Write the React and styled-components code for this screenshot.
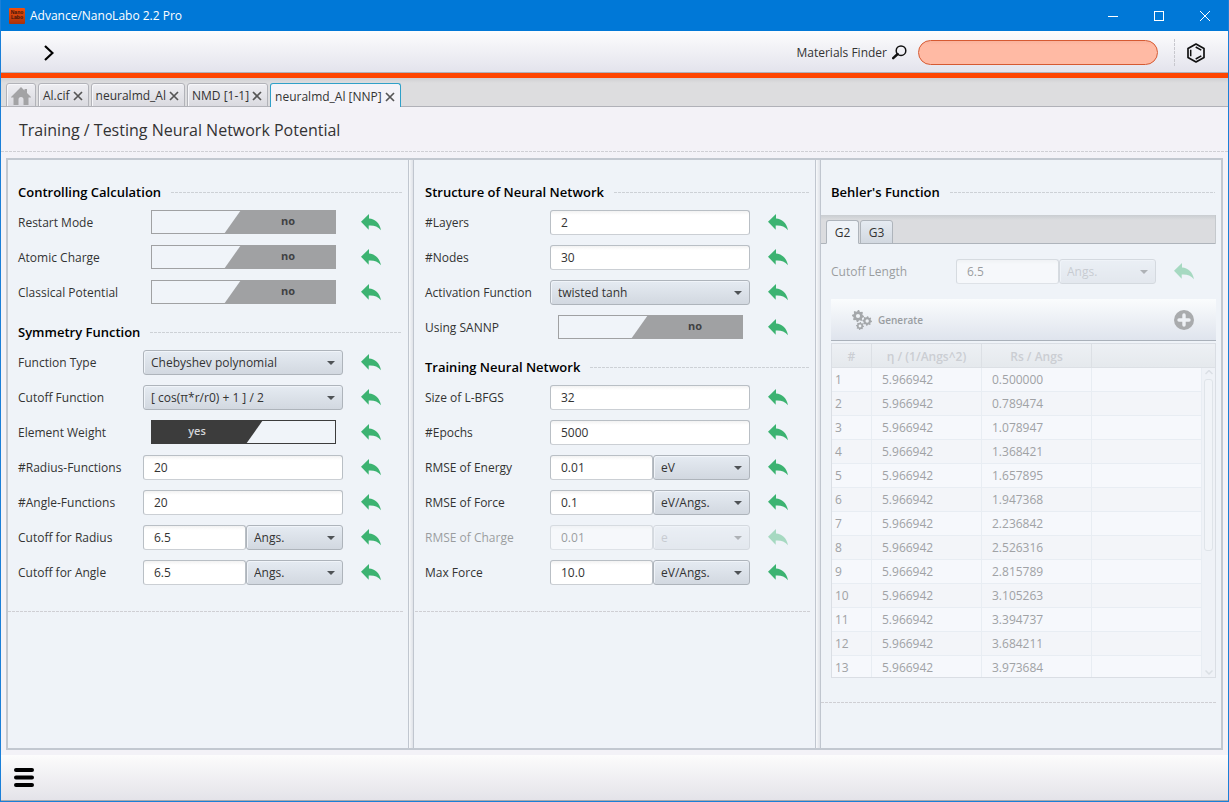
import React from "react";
import styled, { createGlobalStyle, css } from "styled-components";

const GlobalStyle = createGlobalStyle`
  *, *::before, *::after { box-sizing: border-box; }
  html, body { margin: 0; padding: 0; }
  body, button, input, select, table {
    font-family: "Open Sans", "Noto Sans", sans-serif;
    font-size: 12px;
    line-height: 16px;
    color: #333333;
  }
  button { padding: 0; border: 0; background: none; cursor: pointer; }
`;

const dashed = (color) => css`
  background: repeating-linear-gradient(to right, ${color} 0 3px, transparent 3px 4px);
`;

/* ---------- window frame ---------- */

const Window = styled.div`
  display: flex;
  flex-direction: column;
  min-height: 100vh;
  border: 1px solid #1a7fd8;
  border-top: 0;
  background: #f3f2f7;
`;

const TitleBar = styled.header`
  display: flex;
  align-items: center;
  height: 31px;
  padding-left: 8px;
  background: #0078d7;
  color: #ffffff;
`;

const AppIcon = styled.svg`
  width: 16px;
  height: 16px;
  margin-right: 5px;
`;

const AppTitle = styled.h1`
  margin: 0;
  flex: 1;
  font-size: 12px;
  font-weight: 400;
`;

const WindowButton = styled.button`
  display: flex;
  align-items: center;
  justify-content: center;
  width: 46px;
  height: 31px;
  color: #ffffff;
`;

/* ---------- top toolbar ---------- */

const TopBar = styled.div`
  display: flex;
  align-items: center;
  height: 47px;
  padding: 1px 22px 0 38px;
  border-bottom: 5px solid #ff4500;
  background: linear-gradient(#fcfcfd, #e3e3ec);
  box-shadow: inset 0 -1px 0 #b0b1b8;
`;

const IconButton = styled.button`
  display: flex;
  align-items: center;
  justify-content: center;
  width: 20px;
  height: 24px;
  color: #000000;
`;

const FinderLabel = styled.label`
  display: flex;
  align-items: center;
  gap: 5px;
  margin-left: auto;
  margin-right: 11px;
`;

const SearchBox = styled.input`
  width: 240px;
  height: 25px;
  padding: 0 14px;
  border: 1px solid #d65a32;
  border-radius: 13px;
  background: linear-gradient(#f9b39d, #ffbaa4 4px);
  outline: none;
`;

const ToolbarRule = styled.div`
  width: 1px;
  height: 27px;
  margin: 0 11px 0 16px;
  background: repeating-linear-gradient(#c8c8ce 0 3px, transparent 3px 4px);
`;

/* ---------- document tabs ---------- */

const DocTabs = styled.nav`
  display: flex;
  align-items: flex-end;
  gap: 2px;
  height: 29px;
  padding-left: 5px;
  background: linear-gradient(#cfcfd2, #dddddf 5px);
  box-shadow: inset 0 -1px 0 #b0b1b8;
`;

const DocTab = styled.div`
  display: flex;
  align-items: center;
  gap: 3px;
  height: 24px;
  padding: 2px 5px 0 4px;
  border: 1px solid #b2b3b9;
  border-radius: 3px 3px 0 0;
  background: linear-gradient(#eeeef2, #dadae0);
  box-shadow: inset 1px 1px 0 #f7f7fa;
  ${(p) => p.$home && css`
    width: 30px;
    padding: 2px 0 0;
    justify-content: center;
  `}
  ${(p) => p.$active && css`
    border-color: #2fa0c8;
    border-bottom: 0;
    background: #f4f3f8;
    box-shadow: none;
  `}
`;

const TabName = styled.button`
  font-size: 12px;
  white-space: nowrap;
`;

const TabClose = styled.button`
  display: flex;
  color: #555555;
`;

const PageTitle = styled.h2`
  margin: 0;
  padding: 13px 18px 11px;
  font-size: 16px;
  font-weight: 500;
  line-height: 20px;
  color: #333333;
`;

const Rule = styled.div`
  height: 1px;
  ${dashed("#cfcfd4")}
`;

/* ---------- panels ---------- */

const Panels = styled.main`
  display: grid;
  grid-template-columns: minmax(0, 1fr) 7px minmax(0, 1fr) 6px minmax(0, 1fr);
  flex: 1;
  margin: 6px 5px 5px;
  border: 2px solid #c2c8d0;
  background: #eff3f8;
`;

const Divider = styled.div`
  width: 6px;
  border: solid #c0c6cf;
  border-width: 0 1px;
  background: linear-gradient(to right, #f7f9fb, #dfe2e8);
`;

const Column = styled.section`
  padding: 22px 5px 0 0;
`;

const Heading = styled.h3`
  display: flex;
  align-items: center;
  gap: 10px;
  height: 20px;
  margin: 0 1px 8px 10px;
  font-size: 13px;
  font-weight: 600;
  line-height: 20px;
  color: #000000;
  white-space: nowrap;
  &::after {
    content: "";
    flex: 1;
    height: 1px;
    ${dashed("#cdd1d6")}
  }
`;

const Fields = styled.div`
  display: grid;
  gap: 10px;
  padding-left: 10px;
  & + ${Heading} { margin-top: 17px; }
`;

const EndRule = styled(Rule)`
  margin-top: 26px;
`;

const FieldRow = styled.div`
  display: grid;
  grid-template-columns: 125px 200px 20px;
  align-items: center;
  height: 25px;
  & > :last-child { margin-left: 18px; }
`;

const FieldLabel = styled.label`
  white-space: nowrap;
  opacity: ${(p) => (p.$off ? 0.45 : 1)};
`;

const Control = styled.div`
  display: flex;
  height: 25px;
`;

const TextBox = styled.input`
  flex: 1;
  min-width: 0;
  height: 25px;
  padding: 0 10px;
  border: 1px solid #b9bfc5;
  border-bottom-color: #cbcfd4;
  border-radius: 3px;
  background: linear-gradient(#f2f2f2, #ffffff 4px);
  outline: none;
  &:disabled {
    opacity: 0.45;
  }
`;

const SelectBox = styled.div`
  position: relative;
  width: ${(p) => (p.$unit ? "97px" : "100%")};
  opacity: ${(p) => (p.$off ? 0.4 : 1)};
  &::after {
    content: "";
    position: absolute;
    top: 11px;
    right: 8px;
    border: 4px solid transparent;
    border-top-color: #4f5356;
    border-bottom: 0;
    pointer-events: none;
  }
`;

const Select = styled.select`
  appearance: none;
  width: 100%;
  height: 25px;
  padding: 0 20px 0 7px;
  border: 1px solid #aeb4bb;
  border-radius: 3px;
  background: linear-gradient(#e5ebf2, #d2d8e0);
  box-shadow: inset 1px 1px 0 #f0f4f9;
  outline: none;
  &:disabled { color: #8d9298; opacity: 1; }
`;

const Toggle = styled.span`
  position: relative;
  display: block;
  flex: 1;
  height: 24px;
  margin: 0 7px 0 8px;
  border: 1px solid ${(p) => (p.$on ? "#3c3c3c" : "#a0a1a3")};
  background: #f0f4f9;
`;

const ToggleFill = styled.span`
  position: absolute;
  top: -1px;
  bottom: -1px;
  display: flex;
  align-items: center;
  justify-content: center;
  padding-bottom: 2px;
  font-size: 11px;
  font-weight: 700;
  pointer-events: none;
  ${(p) => p.$on ? css`
    left: -1px;
    width: 112px;
    padding-right: 20px;
    background: #3c3c3c;
    color: #d5d6d8;
    font-weight: 600;
    clip-path: polygon(0 0, 100% 0, 95px 100%, 0 100%);
  ` : css`
    right: -1px;
    width: 112px;
    padding-left: 16px;
    background: #a0a1a3;
    color: #404143;
    clip-path: polygon(17px 0, 100% 0, 100% 100%, 0 100%);
  `}
`;

const ToggleInput = styled.input`
  appearance: none;
  position: absolute;
  inset: 0;
  margin: 0;
  cursor: pointer;
`;

const UndoButton = styled.button`
  display: flex;
  align-items: center;
  width: 20px;
  height: 25px;
  color: #3cb371;
  opacity: ${(p) => (p.disabled ? 0.4 : 1)};
`;

/* ---------- Behler's function ---------- */

const SubTabs = styled.div`
  display: flex;
  align-items: flex-end;
  gap: 1px;
  height: 29px;
  margin: 13px 0 15px;
  padding-left: 5px;
  border-right: 1px solid #c5c9cd;
  background: linear-gradient(#c9cdd1, #dbdcdf 5px);
  box-shadow: inset 0 -1px 0 #aeb4bb;
`;

const SubTab = styled.button`
  width: 33px;
  height: 24px;
  padding-top: 1px;
  border: 1px solid #aeb4bb;
  border-radius: 3px 3px 0 0;
  background: linear-gradient(#e5ebf2, #d2d8e0);
  ${(p) => p.$active && css`
    border-bottom-color: transparent;
    background: #eff3f8;
    background-clip: border-box;
  `}
`;

const GridBar = styled.div`
  display: flex;
  align-items: center;
  justify-content: space-between;
  height: 42px;
  margin: 15px 0 2px 10px;
  padding: 0 22px 0 21px;
  border-bottom: 1px solid #aab1ba;
  background: linear-gradient(#fafcfd, #dfe4ed);
`;

const GenerateButton = styled.button`
  display: flex;
  align-items: center;
  gap: 6px;
  font-size: 10px;
  font-weight: 600;
  color: #999da1;
`;

const AddButton = styled.button`
  display: flex;
`;

const TableFrame = styled.div`
  display: grid;
  grid-template-columns: minmax(0, 1fr) 13px;
  grid-template-rows: 24px 309px;
  height: 335px;
  margin: 0 0 24px 10px;
  overflow: hidden;
  border: 1px solid #dadee4;
  background: #f6f8fc;
`;

const Table = styled.table`
  grid-row: 1 / 3;
  width: 100%;
  border-collapse: separate;
  border-spacing: 0;
  table-layout: fixed;
  color: #a0a2a5;
  col:nth-child(1) { width: 40px; }
  col:nth-child(2), col:nth-child(3) { width: 110px; }
  th {
    height: 24px;
    padding: 2px 0 0;
    border: solid #dce0e5;
    border-width: 0 1px 1px 0;
    background: linear-gradient(#edf0f4, #e5e9ed);
    color: #cbced3;
    font-weight: 600;
  }
  th:last-child { border-right: 0; }
  td {
    height: 24px;
    padding: 0 0 0 10px;
    border: solid #e8edf3;
    border-width: 0 1px 1px 0;
  }
  td:first-child { padding-left: 3px; }
  tr:nth-child(even) td { background: #f3f5f9; }
`;

const HeaderCorner = styled.div`
  border-bottom: 1px solid #dce0e5;
  background: linear-gradient(#edf0f4, #e5e9ed);
`;

const ScrollTrack = styled.div`
  display: flex;
  flex-direction: column;
  align-items: center;
  gap: 4px;
  padding: 2px 0 2px;
  background: #eff2f7;
`;

const ScrollThumb = styled.div`
  width: 9px;
  height: 172px;
  border: 1px solid #dfe4e9;
  border-radius: 3px;
  background: #f1f4f8;
  margin-bottom: auto;
`;

/* ---------- footer ---------- */

const Footer = styled.footer`
  display: flex;
  align-items: center;
  height: 46px;
  padding: 0 13px;
  border-bottom: 1px solid #a8a9ae;
  background: linear-gradient(#fcfcfc, #e4e3e9);
`;

/* ---------- drawings ---------- */

const UndoIcon = () => (
  <svg width="20" height="17" viewBox="0 0 20 17" aria-hidden="true">
    <path d="M0 7.700 8 0V4.600C14 5 18.500 9 20 16.200C16.500 12.300 13 11.300 7.700 11.600V15.800Z" fill="currentColor" />
  </svg>
);

const CrossIcon = () => (
  <svg width="10" height="10" viewBox="0 0 10 10" aria-hidden="true">
    <path d="M1 1 9 9M9 1 1 9" stroke="currentColor" strokeWidth="1.700" fill="none" />
  </svg>
);

const HomeIcon = () => (
  <svg width="20" height="18" viewBox="0 0 20 18" aria-hidden="true">
    <path d="M10 0 13.500 3.500V2H16V6L20 10V10.500H17.500V18H12.500V12.500A2.500 2.500 0 0 0 7.500 12.500V18H2.500V10.500H0V10Z" fill="#a3a3a5" />
  </svg>
);

const FinderIcon = () => (
  <svg width="15" height="15" viewBox="0 0 15 15" aria-hidden="true">
    <circle cx="9" cy="5.700" r="4.800" fill="none" stroke="#111" strokeWidth="1.500" />
    <path d="M5.700 9 1.200 13.200" stroke="#111" strokeWidth="2.400" strokeLinecap="round" />
  </svg>
);

const BenzeneIcon = () => (
  <svg width="20" height="20" viewBox="0 0 20 20" fill="none" stroke="#111" aria-hidden="true">
    <path d="M10 1 18 5.500V14.500L10 19 2 14.500V5.500Z" strokeWidth="1.700" strokeLinejoin="round" />
    <path d="M4.700 6.700V13.300M9.700 4 15.300 7.100M9.700 16 15.300 12.900" strokeWidth="1.500" />
  </svg>
);

const gearPath = (cx, cy, r, teeth) => {
  const pts = [];
  const n = teeth * 4;
  for (let i = 0; i < n; i++) {
    const rad = i % 4 < 2 ? r : r * 0.78;
    const a = (i / n) * Math.PI * 2;
    pts.push(`${(cx + rad * Math.cos(a)).toFixed(2)} ${(cy + rad * Math.sin(a)).toFixed(2)}`);
  }
  return `M${pts.join("L")}Z`;
};

const GearsIcon = () => (
  <svg width="20" height="20" viewBox="0 0 20 20" aria-hidden="true">
    {[[6, 6, 6, 2.1], [15.2, 11, 4.8, 1.700], [8, 16, 4, 1.4]].map(([x, y, r, hole]) => (
      <g key={x}>
        <path d={gearPath(x, y, r, 8)} fill="#a5a8ab" />
        <circle cx={x} cy={y} r={hole} fill="#eff2f6" />
      </g>
    ))}
  </svg>
);

const PlusIcon = () => (
  <svg width="20" height="20" viewBox="0 0 20 20" aria-hidden="true">
    <circle cx="10" cy="10" r="10" fill="#a9abad" />
    <path d="M10 5V15M5 10H15" stroke="#eef1f5" strokeWidth="3.400" strokeLinecap="round" />
  </svg>
);

const Caret = ({ down }) => (
  <svg width="8" height="5" viewBox="0 0 8 5" aria-hidden="true">
    <path d={down ? "M0.500 0.500 4 4 7.500 0.500" : "M0.500 4 4 0.500 7.500 4"} stroke="#dadfe4" strokeWidth="1.500" fill="none" />
  </svg>
);

/* ---------- form parts ---------- */

function Field({ field }) {
  const { label, type, value, unit, off } = field;
  const id = label.toLowerCase().replace(/[^a-z]+/g, "-");
  const [on, setOn] = React.useState(value === "yes");
  return (
    <FieldRow>
      <FieldLabel htmlFor={id} $off={off}>{label}</FieldLabel>
      <Control>
        {type === "toggle" && (
          <Toggle $on={on}>
            <ToggleInput id={id} type="checkbox" checked={on} onChange={() => setOn(!on)} />
            <ToggleFill $on={on}>{on ? "yes" : "no"}</ToggleFill>
          </Toggle>
        )}
        {type === "select" && (
          <SelectBox>
            <Select id={id} defaultValue={value}><option>{value}</option></Select>
          </SelectBox>
        )}
        {type === "text" && <TextBox id={id} defaultValue={value} disabled={off} />}
        {unit && (
          <SelectBox $unit $off={off}>
            <Select aria-label={`${label} unit`} defaultValue={unit} disabled={off}>
              <option>{unit}</option>
            </Select>
          </SelectBox>
        )}
      </Control>
      <UndoButton aria-label={`Reset ${label}`} disabled={off}><UndoIcon /></UndoButton>
    </FieldRow>
  );
}

function Group({ title, fields }) {
  return (
    <>
      <Heading>{title}</Heading>
      <Fields>{fields.map((f) => <Field key={f.label} field={f} />)}</Fields>
    </>
  );
}

const toggle = (label, value) => ({ label, type: "toggle", value });
const select = (label, value) => ({ label, type: "select", value });
const text = (label, value, unit, off = false) => ({ label, type: "text", value, unit, off });

const controlling = [
  toggle("Restart Mode", "no"),
  toggle("Atomic Charge", "no"),
  toggle("Classical Potential", "no"),
];
const symmetry = [
  select("Function Type", "Chebyshev polynomial"),
  select("Cutoff Function", "[ cos(π*r/r0) + 1 ] / 2"),
  toggle("Element Weight", "yes"),
  text("#Radius-Functions", "20"),
  text("#Angle-Functions", "20"),
  text("Cutoff for Radius", "6.5", "Angs."),
  text("Cutoff for Angle", "6.5", "Angs."),
];
const structure = [
  text("#Layers", "2"),
  text("#Nodes", "30"),
  select("Activation Function", "twisted tanh"),
  toggle("Using SANNP", "no"),
];
const training = [
  text("Size of L-BFGS", "32"),
  text("#Epochs", "5000"),
  text("RMSE of Energy", "0.01", "eV"),
  text("RMSE of Force", "0.1", "eV/Angs."),
  text("RMSE of Charge", "0.01", "e", true),
  text("Max Force", "10.0", "eV/Angs."),
];
const shifts = [
  "0.500000", "0.789474", "1.078947", "1.368421", "1.657895", "1.947368", "2.236842",
  "2.526316", "2.815789", "3.105263", "3.394737", "3.684211", "3.973684",
];

export default function App() {
  return (
    <>
      <GlobalStyle />
      <Window>
        <TitleBar>
          <AppIcon viewBox="0 0 16 16" aria-hidden="true">
            <defs>
              <linearGradient id="ember" x1="0" y1="0" x2="0" y2="1">
                <stop offset="0" stopColor="#f4500c" />
                <stop offset="1" stopColor="#a8320c" />
              </linearGradient>
            </defs>
            <rect width="16" height="16" rx="1" fill="url(#ember)" />
            <g fontFamily="Liberation Sans" fontSize="5" fontWeight="700" fill="#40140a" textAnchor="middle">
              <text x="8" y="6">Nano</text>
              <text x="8" y="11">Labo</text>
            </g>
          </AppIcon>
          <AppTitle>Advance/NanoLabo 2.2 Pro</AppTitle>
          <WindowButton aria-label="Minimize">
            <svg width="10" height="10"><path d="M0 5.500H10" stroke="currentColor" /></svg>
          </WindowButton>
          <WindowButton aria-label="Maximize">
            <svg width="10" height="10"><rect x="0.500" y="0.500" width="9" height="9" fill="none" stroke="currentColor" /></svg>
          </WindowButton>
          <WindowButton aria-label="Close">
            <svg width="10" height="10"><path d="M0 0 10 10M10 0 0 10" stroke="currentColor" /></svg>
          </WindowButton>
        </TitleBar>

        <TopBar>
          <IconButton aria-label="Expand">
            <svg width="10" height="16" viewBox="0 0 10 16">
              <path d="M1 1 8.500 8 1 15" fill="none" stroke="currentColor" strokeWidth="2.200" />
            </svg>
          </IconButton>
          <FinderLabel htmlFor="finder">Materials Finder<FinderIcon /></FinderLabel>
          <SearchBox id="finder" />
          <ToolbarRule />
          <IconButton aria-label="Molecule"><BenzeneIcon /></IconButton>
        </TopBar>

        <DocTabs>
          <DocTab $home><TabClose aria-label="Home"><HomeIcon /></TabClose></DocTab>
          {["Al.cif", "neuralmd_Al", "NMD [1-1]", "neuralmd_Al [NNP]"].map((name, i) => (
            <DocTab key={name} $active={i === 3}>
              <TabName>{name}</TabName>
              <TabClose aria-label={`Close ${name}`}><CrossIcon /></TabClose>
            </DocTab>
          ))}
        </DocTabs>

        <PageTitle>Training / Testing Neural Network Potential</PageTitle>
        <Rule />

        <Panels>
          <Column>
            <Group title="Controlling Calculation" fields={controlling} />
            <Group title="Symmetry Function" fields={symmetry} />
            <EndRule />
          </Column>
          <Divider />
          <Column>
            <Group title="Structure of Neural Network" fields={structure} />
            <Group title="Training Neural Network" fields={training} />
            <EndRule />
          </Column>
          <Divider />
          <Column>
            <Heading>Behler's Function</Heading>
            <SubTabs>
              <SubTab $active>G2</SubTab>
              <SubTab>G3</SubTab>
            </SubTabs>
            <Fields><Field field={text("Cutoff Length", "6.5", "Angs.", true)} /></Fields>
            <GridBar>
              <GenerateButton disabled><GearsIcon />Generate</GenerateButton>
              <AddButton disabled aria-label="Add"><PlusIcon /></AddButton>
            </GridBar>
            <TableFrame>
              <Table>
                <colgroup><col /><col /><col /><col /></colgroup>
                <thead>
                  <tr><th>#</th><th>η / (1/Angs^2)</th><th>Rs / Angs</th><th /></tr>
                </thead>
                <tbody>
                  {shifts.map((rs, i) => (
                    <tr key={rs}><td>{i + 1}</td><td>5.966942</td><td>{rs}</td><td /></tr>
                  ))}
                </tbody>
              </Table>
              <HeaderCorner />
              <ScrollTrack>
                <Caret />
                <ScrollThumb />
                <Caret down />
              </ScrollTrack>
            </TableFrame>
            <Rule />
          </Column>
        </Panels>

        <Footer>
          <IconButton aria-label="Menu">
            <svg width="20" height="19" viewBox="0 0 20 19">
              <path d="M2 2H18M2 9.500H18M2 17H18" stroke="currentColor" strokeWidth="4" strokeLinecap="round" />
            </svg>
          </IconButton>
        </Footer>
      </Window>
    </>
  );
}
